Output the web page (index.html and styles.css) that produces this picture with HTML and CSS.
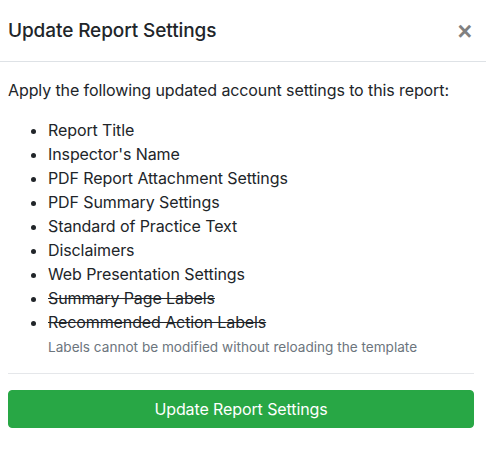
FILE: index.html
```html
<!DOCTYPE html>
<html>
<head>
<meta charset="utf-8">
<link rel="stylesheet" href="styles.css">
</head>
<body>
<div class="modal">
  <div class="modal-header">
    <h5 class="modal-title">Update Report Settings</h5>
    <button class="close" type="button">&times;</button>
  </div>
  <div class="modal-body">
    <p class="intro">Apply the following updated account settings to this report:</p>
    <ul class="settings">
      <li>Report Title</li>
      <li>Inspector's Name</li>
      <li>PDF Report Attachment Settings</li>
      <li>PDF Summary Settings</li>
      <li>Standard of Practice Text</li>
      <li>Disclaimers</li>
      <li>Web Presentation Settings</li>
      <li class="struck">Summary Page Labels</li>
      <li class="struck">Recommended Action Labels</li>
    </ul>
    <small class="help">Labels cannot be modified without reloading the template</small>
    <hr class="divider">
    <button class="btn-update" type="button">Update Report Settings</button>
  </div>
</div>
</body>
</html>
```
FILE: styles.css
```css
* { box-sizing: border-box; }
html, body {
  margin: 0;
  padding: 0;
  background: #fff;
}
body {
  font-family: Inter, "Liberation Sans", sans-serif;
  font-size: 16px;
  line-height: 24px;
  color: #212529;
  width: 486px;
}
.modal {
  display: flex;
  flex-direction: column;
}
.modal-header {
  display: flex;
  align-items: center;
  justify-content: space-between;
  padding: 16px 14px 15px 8px;
  border-bottom: 1px solid #dee2e6;
}
.modal-title {
  margin: 0;
  font-size: 19px;
  font-weight: 500;
  line-height: 30px;
  letter-spacing: -0.1px;
}
.close {
  border: 0;
  background: transparent;
  padding: 0;
  font-family: "Liberation Sans", sans-serif;
  font-size: 25px;
  font-weight: 700;
  line-height: 1;
  color: #808080;
  cursor: pointer;
}
.modal-body {
  padding: 16px 12px 16px 8px;
  display: flex;
  flex-direction: column;
}
.intro {
  margin: 0 0 16px;
  letter-spacing: -0.1px;
}
.settings {
  margin: 0;
  padding-left: 40px;
  letter-spacing: -0.1px;
}
.struck {
  text-decoration: line-through;
}
.help {
  display: block;
  margin-top: 4px;
  padding-left: 40px;
  font-size: 13.6px;
  line-height: 19px;
  color: #6c757d;
}
.divider {
  margin: 16px 0;
  border: 0;
  border-top: 1px solid #e5e7ea;
  height: 0;
}
.btn-update {
  display: block;
  width: 100%;
  height: 38px;
  border: 1px solid #28a745;
  border-radius: 4px;
  background: #28a745;
  color: #fff;
  font-family: inherit;
  font-size: 16px;
  letter-spacing: -0.1px;
  cursor: pointer;
}
```
